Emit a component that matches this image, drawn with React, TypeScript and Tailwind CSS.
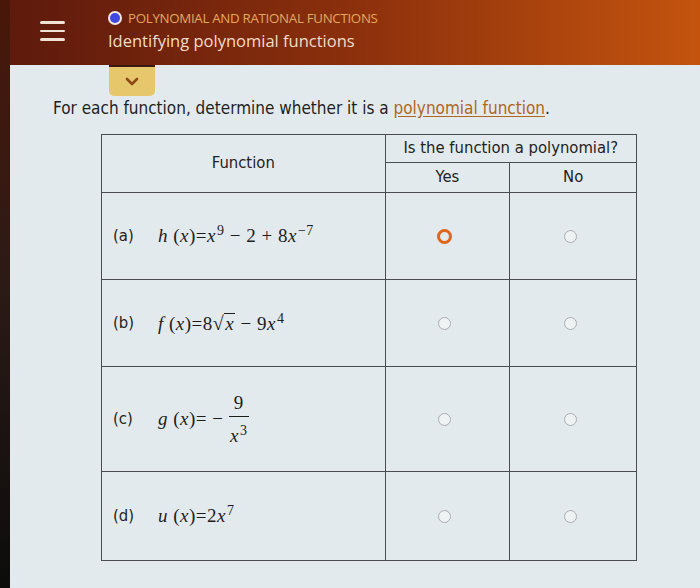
import React from 'react';

const rows = [
  { label: '(a)', h: 'h-[87px]', fn: 'a', picked: true },
  { label: '(b)', h: 'h-[87px]', fn: 'b', picked: false },
  { label: '(c)', h: 'h-[105px]', fn: 'c', picked: false },
  { label: '(d)', h: 'h-[89px]', fn: 'd', picked: false },
];

function Sup({ children }: { children: React.ReactNode }) {
  return <sup className="relative -top-[7px] ml-[1px] text-[14px] not-italic">{children}</sup>;
}

function Formula({ id }: { id: string }) {
  const base = "font-['Liberation_Serif',serif] text-[19px] text-[#1d1d1d] tracking-[0.5px]";
  if (id === 'a')
    return (
      <span className={base}>
        <i>h</i> (<i>x</i>)=<i>x</i><Sup>9</Sup> − 2 + 8<i>x</i><Sup>−7</Sup>
      </span>
    );
  if (id === 'b')
    return (
      <span className={`${base} inline-flex items-baseline`}>
        <i>f</i>&nbsp;(<i>x</i>)=8
        <span className="inline-flex items-baseline">
          <span className="text-[20px]">√</span>
          <span className="border-t border-[#1d1d1d] leading-[20px] px-[1px]"><i>x</i></span>
        </span>
        &nbsp;− 9<i>x</i><Sup>4</Sup>
      </span>
    );
  if (id === 'c')
    return (
      <span className={`${base} inline-flex items-center`}>
        <i>g</i>&nbsp;(<i>x</i>)= −&nbsp;
        <span className="inline-flex flex-col items-center">
          <span className="leading-[22px]">9</span>
          <span className="w-[20px] border-t border-[#1d1d1d] mt-[2px]" />
          <span className="leading-[22px] mt-[8px]"><i>x</i><Sup>3</Sup></span>
        </span>
      </span>
    );
  return (
    <span className={base}>
      <i>u</i> (<i>x</i>)=2<i>x</i><Sup>7</Sup>
    </span>
  );
}

function Radio({ picked }: { picked: boolean }) {
  return picked ? (
    <span className="block w-[15px] h-[15px] rounded-full border-[3px] border-[#e0661e]" />
  ) : (
    <span className="block w-[13px] h-[13px] rounded-full border border-[#a9aeb0] bg-[#eef2f3]" />
  );
}

export default function App() {
  return (
    <div className="w-[700px] h-[588px] flex overflow-hidden bg-[#e3eaed]">
      {/* dark bezel strip on the left */}
      <div className="w-[10px] shrink-0 bg-gradient-to-b from-[#4a1608] via-[#2a1a16] to-[#0c0c0c]" />

      <div className="flex-1 flex flex-col">
        {/* Header */}
        <header className="h-[65px] shrink-0 flex items-start bg-gradient-to-r from-[#5e1a0c] via-[#8c300c] to-[#c4540e]">
          <div className="mt-[21px] ml-[30px] flex flex-col gap-[6px] w-[25px]">
            <span className="h-[2.5px] bg-[#f1e2d6] rounded" />
            <span className="h-[2.5px] bg-[#f1e2d6] rounded" />
            <span className="h-[2.5px] bg-[#f1e2d6] rounded" />
          </div>
          <div className="ml-[43px] mt-[9px] flex flex-col font-['Open_Sans',sans-serif]">
            <div className="flex items-center gap-[8px] ml-[2px]">
              <span className="w-[10px] h-[10px] rounded-full bg-[#3f48e0] ring-2 ring-[#f2e6e0]" />
              <span className="text-[13.3px] leading-[18px] text-[#e3a85e] tracking-[-0.3px]">
                POLYNOMIAL AND RATIONAL FUNCTIONS
              </span>
            </div>
            <span className="mt-[3px] text-[16.5px] leading-[22px] text-[#f3dcc8]">
              Identifying polynomial functions
            </span>
          </div>
        </header>

        {/* Collapse tab */}
        <div className="ml-[99px] w-[46px] h-[31px] bg-[#e6c76c] rounded-b-[5px] border-t-2 border-[#3a1a10] flex items-center justify-center">
          <svg width="14" height="9" viewBox="0 0 14 9">
            <path d="M2 2 L7 7 L12 2" fill="none" stroke="#8d4a14" strokeWidth="2.6" strokeLinecap="round" strokeLinejoin="round" />
          </svg>
        </div>

        {/* Question */}
        <p className="ml-[43px] mt-[1px] text-[17px] leading-[22px] text-[#1f1f1f] font-['DejaVu_Sans_Condensed','DejaVu_Sans',sans-serif]">
          For each function, determine whether it is a{' '}
          <span className="text-[#b0661c] underline underline-offset-2">polynomial function</span>.
        </p>

        {/* Table */}
        <table className="ml-[91px] mt-[15px] w-[536px] border-collapse text-[16.5px] text-[#222] font-['DejaVu_Sans_Condensed','DejaVu_Sans',sans-serif]">
          <colgroup>
            <col className="w-[284px]" />
            <col className="w-[125px]" />
            <col className="w-[127px]" />
          </colgroup>
          <thead>
            <tr className="h-[28px]">
              <th rowSpan={2} className="font-normal border-[1.5px] border-[#4a4d4f]">Function</th>
              <th colSpan={2} className="font-normal border-[1.5px] border-[#4a4d4f]">Is the function a polynomial?</th>
            </tr>
            <tr className="h-[30px]">
              <th className="font-normal border-[1.5px] border-[#4a4d4f]">Yes</th>
              <th className="font-normal border-[1.5px] border-[#4a4d4f]">No</th>
            </tr>
          </thead>
          <tbody>
            {rows.map(r => (
              <tr key={r.label} className={r.h}>
                <td className="border-[1.5px] border-[#4a4d4f] pl-[11px]">
                  <div className="flex items-center">
                    <span className="w-[45px]">{r.label}</span>
                    <Formula id={r.fn} />
                  </div>
                </td>
                <td className="border-[1.5px] border-[#4a4d4f]">
                  <div className="flex justify-center pr-[6px]"><Radio picked={r.picked} /></div>
                </td>
                <td className="border-[1.5px] border-[#4a4d4f]">
                  <div className="flex justify-center pr-[6px]"><Radio picked={false} /></div>
                </td>
              </tr>
            ))}
          </tbody>
        </table>
      </div>
    </div>
  );
}
